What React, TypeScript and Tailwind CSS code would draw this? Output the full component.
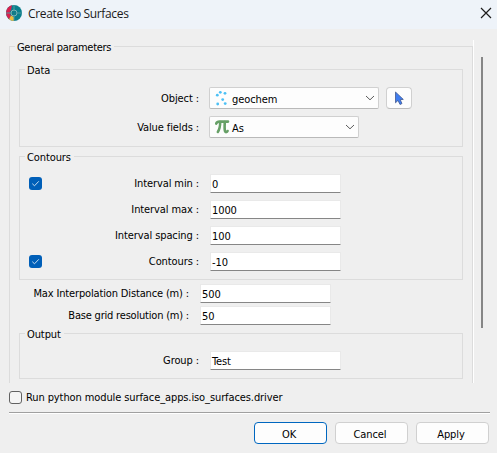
import type { ReactNode } from "react";

function Group({ title, className, legend = "ml-[5px]", children }: { title: string; className: string; legend?: string; children: ReactNode }) {
  return (
    <fieldset className={`box-border min-w-0 border border-[#dcdcdc] ${className}`}>
      <legend className={`h-[15px] pl-[2px] pr-[3px] leading-[17px] whitespace-nowrap ${legend}`}>{title}</legend>
      {children}
    </fieldset>
  );
}

function Label({ text, className }: { text: string; className: string }) {
  return <span className={`shrink-0 pt-px text-right leading-[16px] whitespace-nowrap ${className}`}>{text}</span>;
}

function Field({ value }: { value: string }) {
  return (
    <div className="flex h-[19px] w-[131px] shrink-0 items-center rounded-[1px] border border-[#e9e9e9] border-b-[#868686] bg-white pt-[2px] pl-px leading-[15px]">
      {value}
    </div>
  );
}

function Check() {
  return (
    <span className="flex h-[13px] w-[13px] shrink-0 items-center justify-center rounded-[3px] bg-[#005fb8]">
      <svg width="9" height="9" viewBox="0 0 9 9" fill="none" stroke="#c5dcf0" strokeWidth="1">
        <path d="M1.3 4.7 3.5 6.8 7.8 2.3" />
      </svg>
    </span>
  );
}

function Row({ label, value, checked }: { label: string; value: string; checked?: boolean }) {
  return (
    <div className="flex h-[19px] items-center">
      <div className="-mt-px flex w-[31px] shrink-0 pl-[9px]">{checked && <Check />}</div>
      <Label text={label} className="mr-[11px] w-[148px]" />
      <Field value={value} />
    </div>
  );
}

function Combo({ icon, text, className }: { icon: ReactNode; text: string; className: string }) {
  return (
    <div className={`flex h-[22px] shrink-0 items-center rounded-[2px] border border-[#d0d0d0] border-b-[#b9b9b9] bg-[#fdfdfd] pr-[3px] pl-[5px] ${className}`}>
      {icon}
      <span className="ml-[2px] grow pt-[2px] leading-[15px]">{text}</span>
      <svg width="10" height="6" viewBox="0 0 10 6" fill="none" stroke="#5c5c5c" strokeWidth="1">
        <path d="M1 1 5 4.8 9 1" />
      </svg>
    </div>
  );
}

const dots = [[2.3, 5.2], [5.3, 2.3], [10, 3.3], [7.7, 9.6], [2.7, 14], [10.2, 13.6]];

const pointsIcon = (
  <svg width="15" height="16" viewBox="0 0 15 16" fill="#4cc0f5">
    {dots.map(([x, y]) => (
      <circle key={`${x}-${y}`} cx={x} cy={y} r="1.4" />
    ))}
  </svg>
);

const piIcon = (
  <svg width="15" height="16" viewBox="0 0 15 16" fill="none" stroke="#67a067" strokeLinecap="round">
    <path d="M1.2 4.6C2 2.6 3 2.6 4.5 2.6H13" strokeWidth="2.6" />
    <path d="M5.2 3C5.2 7 4.8 10 2.8 13" strokeWidth="2.5" />
    <path d="M9.8 3C9.6 7 9.3 10 10.1 12.4 10.7 13.6 12 13.2 12.6 12" strokeWidth="2.6" />
  </svg>
);

function Button({ text, className }: { text: string; className: string }) {
  return (
    <button className={`h-[22px] w-[73px] rounded-[4px] border bg-[#fdfdfd] pt-[2px] pr-[3px] leading-[15px] ${className}`}>{text}</button>
  );
}

export default function App() {
  return (
    <div className="flex h-[453px] w-[497px] flex-col overflow-hidden bg-[#efefef] font-['DejaVu_Sans_Condensed','DejaVu_Sans',sans-serif] text-[11px] tracking-[-0.1px] text-black">
      <header className="flex h-[29px] shrink-0 items-center bg-[#eef3f9] pl-[6px]">
        <svg width="16" height="16" viewBox="0 0 16 16" className="mt-[-3px]">
          <circle cx="8" cy="8" r="8" fill="#087f8c" />
          <path d="M6 .3A8 8 0 0 0 3 14.2L5 10.5A4 4 0 0 1 5 5Z" fill="#d8204e" />
          <path d="M3 14.2A8 8 0 0 0 8 16V12.2L5 10.5Z" fill="#f3bb3b" />
          <circle cx="8" cy="8" r="3" fill="#117c88" stroke="#7db3b8" />
          <path d="M8 0V5M11 8H16M8 11V16M0 8H5" stroke="#50989f" />
        </svg>
        <h1 className="-mt-px ml-[6px] grow font-['Open_Sans',sans-serif] text-[12px] tracking-[-0.35px] text-[#1a1a1a]">Create Iso Surfaces</h1>
        <svg width="12" height="12" viewBox="0 0 12 12" className="mt-[-3px] mr-[5px]" stroke="#1c1c1c" strokeWidth="1.2">
          <path d="M1 1 11 11M11 1 1 11" />
        </svg>
      </header>

      <main className="flex h-[354px] shrink-0 pt-[10px] pl-[9px]">
        <div className="h-[344px] w-[464px] shrink-0 overflow-hidden">
          <Group title="General parameters" legend="-ml-[4px] tracking-[-0.3px]" className="h-[360px] px-[9px]">
            <Group title="Data" className="mt-[8px] h-[85px]">
              <div className="mt-[10px] flex h-[22px] items-center">
                <Label text="Object :" className="mr-[10px] w-[179px]" />
                <Combo icon={pointsIcon} text="geochem" className="w-[170px]" />
                <button className="ml-[7px] flex h-[22px] w-[26px] items-center justify-center rounded-[4px] border border-[#d0d0d0] border-b-[#bcbcbc] bg-[#fdfdfd]">
                  <svg width="10" height="15" viewBox="0 0 10 15">
                    <path d="M1.5 1V11.8L4 9.4 6 13.5 8 12.5 6.2 8.7 9.3 8.4Z" fill="#3f7df0" stroke="#43598f" strokeWidth=".8" />
                  </svg>
                </button>
              </div>
              <div className="mt-[7px] flex h-[22px] items-center">
                <Label text="Value fields :" className="mr-[10px] w-[179px]" />
                <Combo icon={piIcon} text="As" className="w-[150px]" />
              </div>
            </Group>
            <Group title="Contours" className="mt-[2px] h-[131px]">
              <div className="mt-[10px] flex flex-col gap-[7px]">
                <Row label="Interval min :" value="0" checked />
                <Row label="Interval max :" value="1000" />
                <Row label="Interval spacing :" value="100" />
                <Row label="Contours :" value="-10" checked />
              </div>
            </Group>
            <div className="mt-[4px] flex flex-col gap-[3px]">
              <div className="flex h-[19px] items-center">
                <Label text="Max Interpolation Distance (m) :" className="mr-[11px] w-[170px] tracking-[-0.15px]" />
                <Field value="500" />
              </div>
              <div className="flex h-[19px] items-center">
                <Label text="Base grid resolution (m) :" className="mr-[11px] w-[170px] tracking-[-0.2px]" />
                <Field value="50" />
              </div>
            </div>
            <Group title="Output" className="mt-px h-[53px]">
              <div className="mt-[10px]">
                <Row label="Group :" value="Test" />
              </div>
            </Group>
          </Group>
        </div>
        <div className="mt-px w-px bg-white" />
        <div className="mt-[18px] ml-[7px] h-[271px] w-[2px] bg-[#868686]" />
      </main>

      <div className="mt-[8px] flex h-[13px] shrink-0 items-center pl-[9px]">
        <span className="h-[13px] w-[13px] rounded-[3px] border border-[#626262] bg-[#f5f5f5]" />
        <span className="ml-[4px] pt-[2px] whitespace-nowrap">Run python module surface_apps.iso_surfaces.driver</span>
      </div>
      <div className="mt-[8px] mr-[7px] ml-[9px] h-[2px] shrink-0 border-t border-b border-t-[#a0a0a0] border-b-white" />
      <footer className="mt-[8px] flex justify-end gap-[8px] pr-[8px]">
        <Button text="OK" className="border-[#0067c0]" />
        <Button text="Cancel" className="border-[#d0d0d0]" />
        <Button text="Apply" className="border-[#d0d0d0]" />
      </footer>
    </div>
  );
}
